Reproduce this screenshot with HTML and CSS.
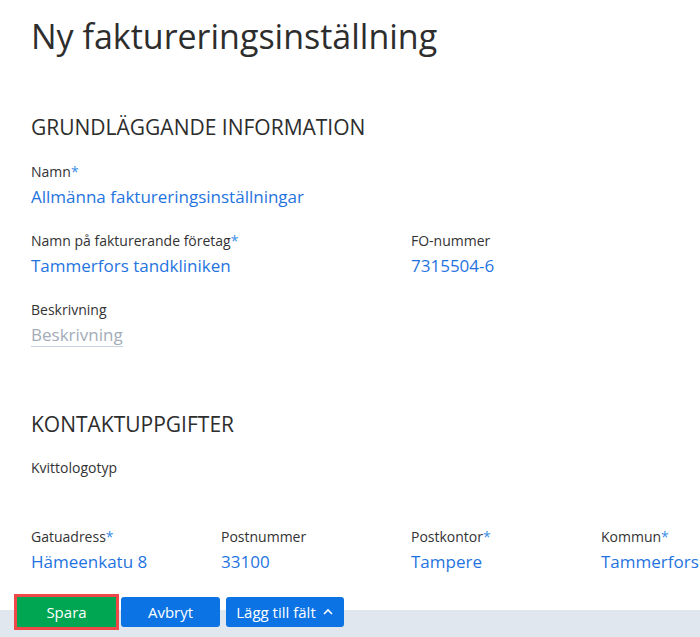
FILE: index.html
```html
<!DOCTYPE html>
<html lang="sv">
<head>
    <meta charset="UTF-8">
    <meta name="viewport" content="width=device-width, initial-scale=1.0">
    <title>Ny faktureringsinställning</title>
    <link rel="stylesheet" href="styles.css">
</head>
<body>
    <div class="page">
        <h1>Ny faktureringsinställning</h1>

        <section class="section">
            <h2>GRUNDLÄGGANDE INFORMATION</h2>
            <div class="grid">
                <div class="field wide">
                    <div class="label">Namn<span class="req">*</span></div>
                    <div class="value">Allmänna faktureringsinställningar</div>
                </div>
                <div class="field span2">
                    <div class="label">Namn på fakturerande företag<span class="req">*</span></div>
                    <div class="value">Tammerfors tandkliniken</div>
                </div>
                <div class="field span2">
                    <div class="label">FO-nummer</div>
                    <div class="value">7315504-6</div>
                </div>
                <div class="field wide">
                    <div class="label">Beskrivning</div>
                    <div class="value"><span class="placeholder">Beskrivning</span></div>
                </div>
            </div>
        </section>

        <section class="section contact">
            <h2>KONTAKTUPPGIFTER</h2>
            <div class="grid">
                <div class="field wide">
                    <div class="label">Kvittologotyp</div>
                    <div class="value"></div>
                </div>
                <div class="field">
                    <div class="label">Gatuadress<span class="req">*</span></div>
                    <div class="value">Hämeenkatu 8</div>
                </div>
                <div class="field">
                    <div class="label">Postnummer</div>
                    <div class="value">33100</div>
                </div>
                <div class="field">
                    <div class="label">Postkontor<span class="req">*</span></div>
                    <div class="value">Tampere</div>
                </div>
                <div class="field">
                    <div class="label">Kommun<span class="req">*</span></div>
                    <div class="value">Tammerfors</div>
                </div>
            </div>
        </section>
    </div>

    <div class="footer">
        <button class="btn save">Spara</button>
        <button class="btn cancel">Avbryt</button>
        <button class="btn add">Lägg till fält
            <svg width="12" height="12" viewBox="0 0 12 12"><polyline points="2,8 6,4 10,8" fill="none" stroke="#fff" stroke-width="1.6"/></svg>
        </button>
    </div>
</body>
</html>
```

FILE: styles.css
```css
body { margin: 0; font-family: "Open Sans", "Noto Sans", sans-serif; color: #333; background: #fff; overflow: hidden; }
.page { padding: 0 0 0 31px; height: 593px; }
h1 { margin: 0; padding-top: 11px; font-size: 34px; font-weight: 400; line-height: 50px; color: #2d2d2d; }
.section { padding-top: 51px; }
.contact { padding-top: 40px; }
h2 { margin: 0 0 20px; font-size: 21px; font-weight: 400; line-height: 30px; color: #2d2d2d; }
.contact h2 { margin-bottom: 19px; }
.grid { display: grid; grid-template-columns: repeat(4, 190px); }
.field { margin-bottom: 21px; }
.wide { grid-column: span 4; }
.span2 { grid-column: span 2; }
.label { font-size: 14px; line-height: 20px; color: #333; }
.req { color: #3a8ee6; }
.value { margin-top: 2px; font-size: 17px; line-height: 26px; height: 26px; color: #1f74e0; white-space: nowrap; }
.placeholder { color: #a3acb8; border-bottom: 1px solid #c9d2dc; }
.footer { height: 44px; padding-left: 14px; display: flex; align-items: flex-start; gap: 2px; background: linear-gradient(#fff 17px, #e1e7ee 17px); }
.btn { height: 30px; margin-top: 4px; padding: 0 10px; border: 0; border-radius: 3px; background: #0b73e3; color: #fff; font-family: inherit; font-size: 15px; display: flex; align-items: center; justify-content: center; gap: 6px; }
.cancel { width: 99px; }
.add { width: 118px; margin-left: 4px; }
.save { margin-top: 1px; width: 105px; height: 36px; border: 3px solid #f04848; border-radius: 0; background: #00a651; }
```
